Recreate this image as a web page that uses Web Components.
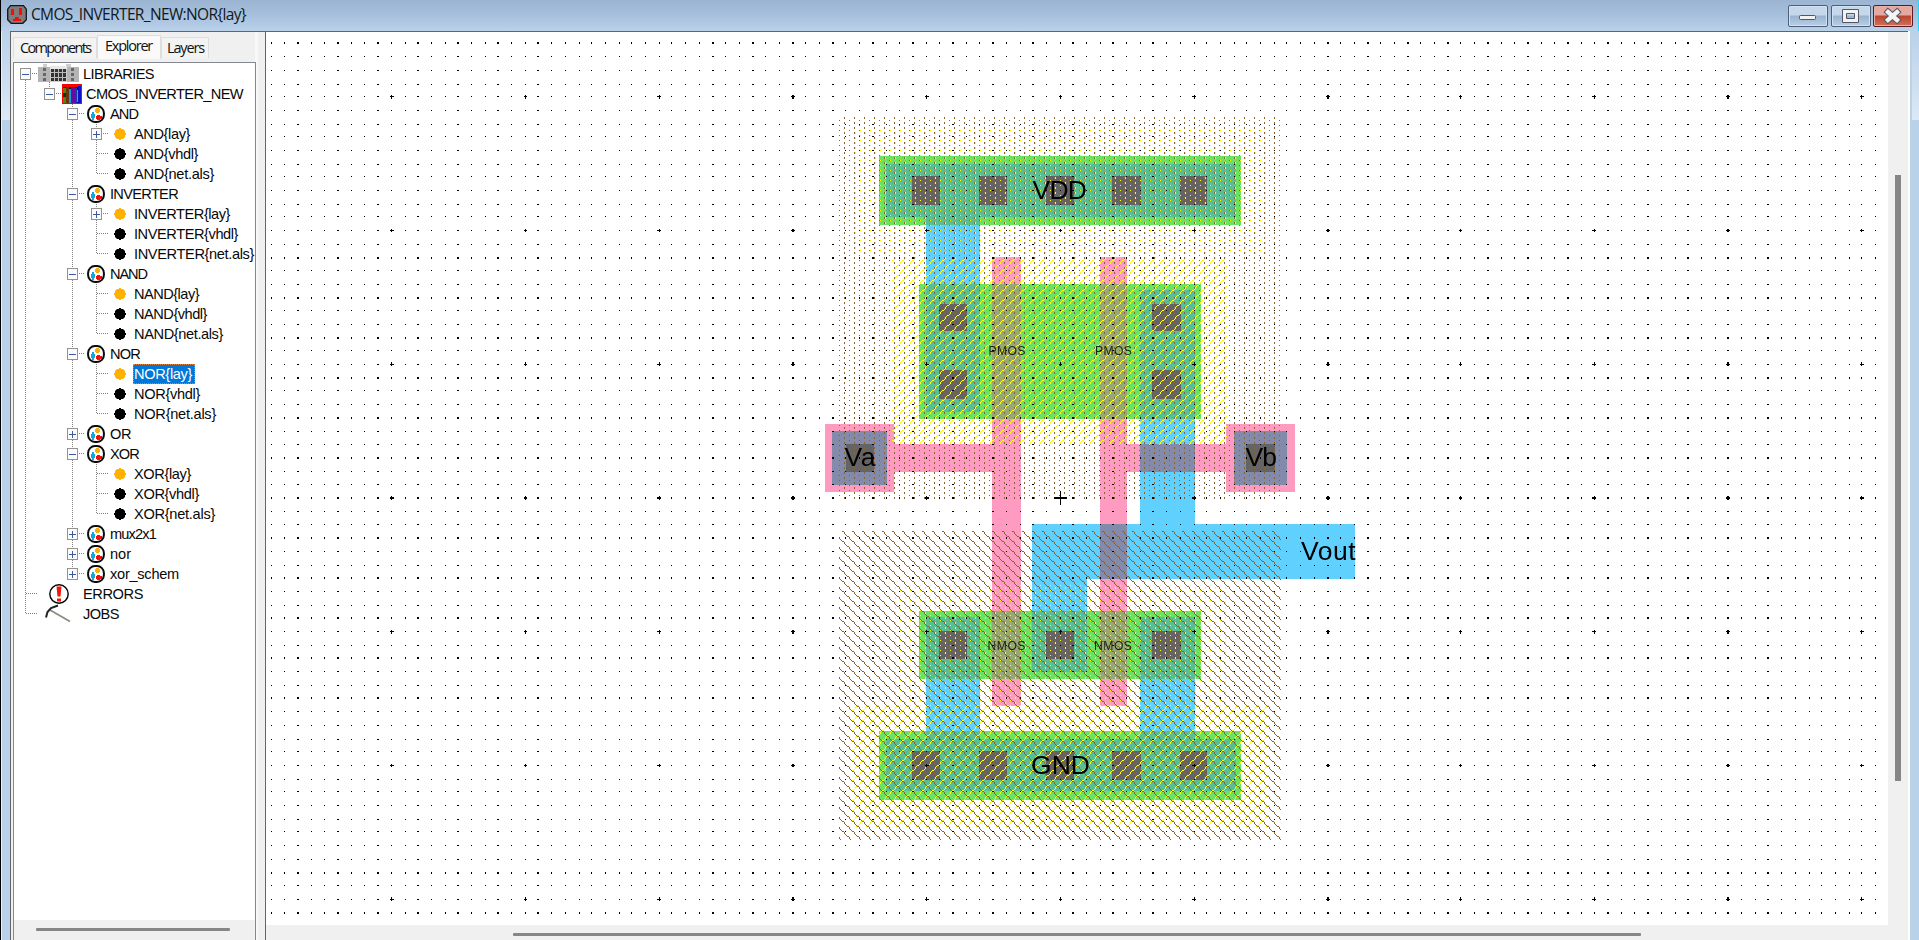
<!DOCTYPE html>
<html lang="en"><head><meta charset="utf-8"><title>CMOS_INVERTER_NEW:NOR{lay}</title>
<style>html,body{margin:0;height:100%;overflow:hidden}</style></head><body>
<layout-window></layout-window>
<script>
const meter = document.createElement('canvas').getContext('2d');
function spacing(text, width, font){ meter.font = font; return (width - meter.measureText(text).width) / text.length; }

/* Text set to a given advance width */
class FitText extends HTMLElement {
  connectedCallback(){
    const t = this.getAttribute('text'), w = +this.getAttribute('w'), f = this.getAttribute('font');
    this.attachShadow({mode:'open'}).innerHTML = `<style>:host{display:block;white-space:pre;font:${f};letter-spacing:${spacing(t,w,f).toFixed(3)}px}</style>${t}`;
  }
}
customElements.define('fit-text', FitText);

class TitleBar extends HTMLElement {
  connectedCallback(){
    this.attachShadow({mode:'open'}).innerHTML = `<style>
    :host{display:flex;height:31px;box-sizing:border-box;padding:0 5px 0 6px;background:linear-gradient(#9ab4d2,#a7c0dc 50%,#bad1ea);align-items:flex-start}
    .ic{margin-top:5px;width:20px;height:19px;flex:none}
    fit-text{margin:4px auto 0 4px;line-height:21px;color:#101820}
    .b{width:38px;height:20px;margin-top:5px;border:1px solid #4d5f79;border-radius:2px;background:linear-gradient(#c5d7ea 0 45%,#98b3cf 50%,#b9cfe6);box-shadow:inset 0 0 0 1px #d3e2f2;margin-left:3px}
    .x{margin-left:2px;background:linear-gradient(#e6a79f 0 45%,#b9432e 50%,#d37058);border-color:#5a1a20;box-shadow:inset 0 0 0 1px #e9b0a8}
    svg{display:block}</style>
    <svg class="ic" viewBox="0 0 20 19"><path d="M3.5.7h13l2.800 3.500v10.500l-3.500 3.600H4.200L.7 14.700V4.200z" fill="#807c7c" stroke="#151515" stroke-width="1.300"/><path d="M4 4h3v6H4zM12 3h3v7h-3zM8 12h3.500l.5 2h2v2H6v-2h2z" fill="#f10d0d"/></svg>
    <fit-text text="CMOS_INVERTER_NEW:NOR{lay}" w="215" font="15.5px 'Open Sans', 'Noto Sans', sans-serif"></fit-text>
    <div class="b"><svg width="38" height="20"><rect x="10.500" y="9.500" width="16" height="4" rx="1" fill="#f2f2f2" stroke="#535666"/></svg></div>
    <div class="b"><svg width="38" height="20"><path d="M10.500 3.500h16v13h-16zM14.500 7.500v5h8v-5z" fill="#f2f2f2" fill-rule="evenodd" stroke="#535666"/></svg></div>
    <div class="b x"><svg width="38" height="20"><path d="M14 6l9 8M23 6l-9 8" stroke="#535666" stroke-width="6.400" stroke-linecap="square"/><path d="M14 6l9 8M23 6l-9 8" stroke="#f4f4f4" stroke-width="4.400" stroke-linecap="square"/></svg></div>`;
  }
}
customElements.define('title-bar', TitleBar);

const ICONS = {
  libs:`<svg width="42" height="20"><path d="M0 3h5V0h4v3h19V0h5v3h8v15H0z" fill="#cdcdcd"/><path d="M0 3h12v15H0zM29 3h12v15H29z" fill="#b4b4b4"/><path d="M12 2h17v3H12z" fill="#e8e8e8"/><path d="M5 4h3v3H5zM5 9h3v3H5zM5 14h3v3H5zM33 4h3v3h-3zM33 9h3v3h-3zM33 14h3v3h-3z" fill="#666"/><path d="M13 5h15v12H13z" fill="#333"/><path d="M13 8.500h15M13 13.500h15M16.500 5v12M20.500 5v12M24.500 5v12" stroke="#bbb"/></svg>`,
  lib:`<svg width="20" height="20"><path d="M0 0h20v20H0z" fill="#f00"/><path d="M1 3h18v16H1z" fill="#111"/><path d="M1 4h3v15H1z" fill="#5f7f10"/><path d="M4 3h3v16H4z" fill="#6a3510"/><path d="M7 5h2v14H7z" fill="#12a0d8"/><path d="M9 3h4v16H9z" fill="#6a0aa0"/><path d="M13 4h2v15h-2z" fill="#163c9c"/><path d="M15 6h1v12h-1z" fill="#20d820"/><path d="M16 2h3v17h-3z" fill="#1010d0"/><path d="M1 9h3v4H1z" fill="#083808"/></svg>`,
  cell:`<svg width="18" height="18"><rect x="1.100" y="1.100" width="15.800" height="15.800" rx="6.800" fill="#fff" stroke="#0b0b0b" stroke-width="2"/><path d="M9 3h3v1h1v3h-1v1H9V7H8V4h1z" fill="#f6ad12"/><path d="M5 7h2v2h1v4H7v2H5v-2H4V9h1z" fill="#14a5df"/><path d="M10 10h3v1h2v3h-2v1h-3v-1H9v-3h1z" fill="#f01010"/></svg>`,
  lay:`<svg width="12" height="12"><path d="M5 0h2v1h2l2 2v2h1v2h-1v2L9 11H7v1H5v-1H3L1 9V7H0V5h1V3l2-2h2z" fill="#ffb000"/></svg>`,
  doc:`<svg width="12" height="12"><path d="M5 0h2v1h2l2 2v2h1v2h-1v2L9 11H7v1H5v-1H3L1 9V7H0V5h1V3l2-2h2z"/></svg>`,
  err:`<svg width="20" height="20"><circle cx="10" cy="10" r="9.200" fill="#fff" stroke="#000" stroke-width="1.400"/><path d="M7.500 2.500h5l-1 10h-3zM8 14.500h4v3H8z" fill="#f01808"/></svg>`,
  job:`<svg width="27" height="20"><path d="M5 6L25 17.500" stroke="#8f9180" stroke-width="2"/><path d="M1 13.500L2.500 8 6 4 13 1.500" fill="none" stroke="#1c2626" stroke-width="2"/></svg>`
};
const CX = [25.5, 49.5, 72.5, 96.5];

class TreeRow extends HTMLElement {
  connectedCallback(){
    const [depth, kind, text, w, box, guides] = this.data;
    const iconX = {libs:38,lib:62,cell:87,lay:114,doc:114,err:49,job:45}[kind];
    const textX = {libs:84,lib:87,cell:111,lay:135,doc:135,err:84,job:84}[kind];
    const iw = {libs:42,lib:20,cell:18,lay:12,doc:12,err:20,job:27}[kind];
    const o = 14, c = CX[depth]-o;
    let g = guides.map(([d,a,b])=>`<path d="M${CX[d]-o} ${a}V${b}"/>`).join('') + `<path d="M${c} 9.500H${c+11}"/>`;
    if(box) g += `<rect x="${c-5}" y="4.500" width="10" height="11" fill="#fbfbfb" style="stroke:#929292;stroke-dasharray:none"/><path d="M${c-3.5} 10.500h7${box=='+'?`M${c} 7v7`:''}" style="stroke:#3b5aa5;stroke-dasharray:none"/>`;
    this.attachShadow({mode:'open'}).innerHTML = `<style>
      :host{display:flex;height:20px;align-items:center;color:#080808}
      .g{flex:none;width:${iconX-o}px;height:20px;overflow:visible}.g path,.g rect{stroke:#808080;stroke-dasharray:1 1;shape-rendering:crispEdges}
      .g path{fill:none}
      .i{flex:none;width:${textX-iconX-2}px;display:flex}
      .t{line-height:18px;height:18px;border:1px dotted transparent}
      .sel{background:#0078d7;color:#fff;border-color:#e0803a;padding-right:2px}
      fit-text{position:relative;top:.5px}</style>
      <svg class="g">${g}</svg><span class="i">${ICONS[kind]}</span><span class="t ${text=='NOR{lay}'?'sel':''}"><fit-text text="${text}" w="${w+1}" font="14.600px 'Liberation Sans', Arial, sans-serif"></fit-text></span>`;
  }
}
customElements.define('tree-row', TreeRow);

const NODES = [[0,'libs','LIBRARIES',70,'-'],[1,'lib','CMOS_INVERTER_NEW',156,'-'],
 [2,'cell','AND',27,'-'],[3,'lay','AND{lay}',55,'+'],[3,'doc','AND{vhdl}',63],[3,'doc','AND{net.als}',79],
 [2,'cell','INVERTER',67,'-'],[3,'lay','INVERTER{lay}',95,'+'],[3,'doc','INVERTER{vhdl}',103],[3,'doc','INVERTER{net.als}',119],
 [2,'cell','NAND',36,'-'],[3,'lay','NAND{lay}',64],[3,'doc','NAND{vhdl}',72],[3,'doc','NAND{net.als}',88],
 [2,'cell','NOR',29,'-'],[3,'lay','NOR{lay}',57],[3,'doc','NOR{vhdl}',65],[3,'doc','NOR{net.als}',81],
 [2,'cell','OR',20,'+'],[2,'cell','XOR',28,'-'],[3,'lay','XOR{lay}',56],[3,'doc','XOR{vhdl}',64],[3,'doc','XOR{net.als}',80],
 [2,'cell','mux2x1',45,'+'],[2,'cell','nor',20,'+'],[2,'cell','xor_schem',68,'+'],[0,'err','ERRORS',59],[0,'job','JOBS',35]];

class ExplorerPanel extends HTMLElement {
  connectedCallback(){
    const F = "14.5px 'Open Sans', 'Noto Sans', sans-serif";
    const s = this.attachShadow({mode:'open'});
    s.innerHTML = `<style>
     :host{display:flex;flex-direction:column;width:247px;background:#f0f0f0;padding-left:2px;border-right:3px solid #f8f8f8;box-sizing:border-box;flex:none}
     .tabs{display:flex;height:30px;align-items:flex-end;box-sizing:border-box;padding-bottom:4px}
     .tab{height:21px;box-sizing:border-box;border:1px solid #dedede;border-bottom:0;background:#f3f3f3;flex:none;padding-left:6px}
     .on{height:24px;background:#fafafa;margin-bottom:-1px}
     .tab fit-text{line-height:20px;color:#111}
     .tree{flex:1;width:241px;border:1px solid #828790;border-bottom:0;background:#fff;overflow:hidden;display:flex;flex-direction:column}
     .rows{padding-top:1px;flex:1}
     .sb{height:20px;background:#f0f0f0;flex:none}.sb i{display:block;width:194px;height:3px;margin:8px 0 0 22px;border-radius:1px;background:#868686}
    </style><div class="tabs">
    <div class="tab" style="width:84px"><fit-text text="Components" w="70.5" font="${F}"></fit-text></div>
    <div class="tab on" style="width:64px;padding-left:7px"><fit-text text="Explorer" w="47" font="${F}"></fit-text></div>
    <div class="tab" style="width:48px;padding-left:5px"><fit-text text="Layers" w="37" font="${F}"></fit-text></div></div>
    <div class="tree"><div class="rows"></div><div class="sb"><i></i></div></div>`;
    const rows = s.querySelector('.rows');
    NODES.forEach((n,i)=>{
      const g = [], next = NODES[i+1];
      g.push([0, i==0?10:0, i==NODES.length-1?10:20]);
      if(i==0) g.push([1,18,20]);
      if(i==1) g.push([1,0,10],[2,18,20]);
      if(i>1 && i<26) g.push([2,0,i==25?10:20]);
      if(n[0]==3) g.push([3,0,next[0]==3?20:10]);
      if(n[0]==2 && next[0]==3) g.push([3,18,20]);
      const r = document.createElement('tree-row');
      r.data = [n[0],n[1],n[2],n[3],n[4],g];
      rows.append(r);
    });
  }
}
customElements.define('explorer-panel', ExplorerPanel);

/* Rectangles are [left, top, right, bottom] in window pixels */
const METAL = [[886,164,1236,217],[926,217,980,412],[1140,290,1195,524],[1032,524,1355,579],[1032,579,1087,672],[926,617,980,739],[1140,617,1195,739],[886,739,1236,791],[832,431,887,485],[1234,431,1287,485]];
const POLY = [[992,257,1021,706],[1100,257,1127,706],[825,424,894,492],[1226,424,1295,492],[894,444,992,472],[1127,444,1226,472]];
const ACTIVE = [[879,156,1241,225],[919,284,1201,419],[919,611,1201,679],[879,731,1241,800]];
const CUTS = [];
for(const x of [[912,940],[979,1007],[1046,1074],[1112,1141],[1180,1207]]) CUTS.push([x[0],176,x[1],205],[x[0],751,x[1],780]);
for(const x of [[939,967],[1152,1181]]) CUTS.push([x[0],304,x[1],331],[x[0],370,x[1],399],[x[0],631,x[1],659]);
CUTS.push([1046,631,1074,659],[846,444,874,472],[1246,444,1275,472]);
/* text, left, baseline, size, advance width */
const LABELS = [['VDD',1032.5,198.500,26.5,54.5],['GND',1031,773.500,26.5,59],['Va',844.5,466,26.5,31],['Vb',1245.5,466,26.5,31.5],['Vout',1301,560,26.5,54.5],['PMOS',988.5,355,12.2,37],['PMOS',1095,355,12.2,37],['NMOS',987.5,650,12.2,38],['NMOS',1094,650,12.2,38]];

const cross = (A,B)=>A.flatMap(a=>B.map(b=>[Math.max(a[0],b[0]),Math.max(a[1],b[1]),Math.min(a[2],b[2]),Math.min(a[3],b[3])])).filter(r=>r[0]<r[2]&&r[1]<r[3]);

/* The canvas works in logical pixels at 125% scaling: each fourth one spans two device pixels */
const dev = s => { const k=Math.floor(s/4), j=s-4*k; return j ? [5*k+3+j,1] : [5*k+2,2]; };
const log = d => { const k=Math.floor((d-2)/5), j=d-2-5*k; return 4*k+Math.max(0,j-1); };

class LayoutCanvas extends HTMLElement {
  connectedCallback(){
    const OX=266, OY=32, W=1622, H=893;
    const rects=(R,c)=>`<g fill="${c}">`+R.map(r=>`<rect x="${r[0]}" y="${r[1]}" width="${r[2]-r[0]}" height="${r[3]-r[1]}"/>`).join('')+'</g>';
    const s=this.attachShadow({mode:'open'});
    s.innerHTML=`<style>:host{display:grid;width:${W}px;height:${H}px;background:#fff;overflow:hidden}svg,canvas{grid-area:1/1;display:block}text{font-family:'Liberation Sans',Arial,sans-serif}</style>
    <svg width="${W}" height="${H}" viewBox="${OX} ${OY} ${W} ${H}" shape-rendering="crispEdges">
    ${rects(METAL,'#60d1ff')}${rects(POLY,'#ff9bc0')}${rects(ACTIVE,'#6be260')}${rects(cross(METAL,POLY),'#848aaa')}${rects(cross(METAL,ACTIVE),'#5abe94')}${rects(cross(POLY,ACTIVE),'#96a874')}${rects(CUTS,'#646464')}</svg>
    <canvas width="${W}" height="${H}"></canvas>
    <svg width="${W}" height="${H}" viewBox="${OX} ${OY} ${W} ${H}">${LABELS.map(l=>`<text x="${l[1]}" y="${l[2]}" font-size="${l[3]}" textLength="${l[4]}" fill="${l[3]<20?'#1c2418':'#000'}">${l[0]}</text>`).join('')}</svg>`;
    const c=s.querySelector('canvas').getContext('2d'); c.translate(-OX,-OY);
    const px=(x,y)=>{const a=dev(x),b=dev(y);c.fillRect(a[0],b[0],a[1],b[1]);};
    const hatch=(r,color,on)=>{c.fillStyle=color;for(let y=log(r[1]);y<=log(r[3]-1);y++)for(let x=log(r[0]);x<=log(r[2]-1);x++)if(on(x,y))px(x,y);};
    const m=(v,n)=>((v%n)+n)%n, B='#8b632e', Y='#ffff00';
    const ax=log(844), ay=log(117), by=log(120);
    const well=(x,y)=>(m(x-ax,8)==0&&m(y-ay,4)==0)||(m(x-ax,8)==4&&m(y-by,4)==0);
    const dots=(x,y)=>(m(x-ax,8)==1&&m(y-ay,4)==0)||(m(x-ax,8)==5&&m(y-by,4)==0);
    hatch([839,117,1281,499],B,well);
    hatch([854,130,1266,253],Y,dots);
    hatch([892,257,1227,445],Y,(x,y)=>m(x+y,8)==6);
    hatch([895,585,1227,706],Y,dots);
    hatch([852,705,1269,827],Y,(x,y)=>m(x+y,8)==6);
    hatch([839,531,1281,840],B,(x,y)=>m(x-y,8)==1);
    c.fillStyle='#000';
    for(let i=-59;i<=61;i++)for(let j=-34;j<=31;j++){
      const x=Math.round(845.6+i*10.695), y=Math.round(396.05+j*10.695); px(x,y);
      if(i%10==0&&j%10==0){const n=i||j?1:5;for(let k=-n;k<=n;k++){px(x+k,y);px(x,y+k);}}
    }
  }
}
customElements.define('layout-canvas', LayoutCanvas);

class LayoutWindow extends HTMLElement {
  connectedCallback(){
    this.attachShadow({mode:'open'}).innerHTML=`<style>
    :host{display:flex;width:1919px;height:940px;box-sizing:border-box;border-left:1px solid #000;border-right:1px solid #2fd3f5;background:#bad1ea;box-shadow:inset 1px 0 #e8f1fa}
    .win{flex:1;display:flex;flex-direction:column;min-width:0}
    .body{display:flex;flex:1;min-height:0}
    .edge{width:8px;margin-left:1px;flex:none;background:linear-gradient(#bad1ea,#dce8f5 89px,#bad1ea 89px)}
    .edge.r{margin:0 0 0 2px;width:7px}
    .in{flex:1;display:flex;border:1px solid #646464;border-right:0;border-bottom:0;background:#f0f0f0}
    .sep{width:7px;flex:none;background:#f0f0f0;border-right:1px solid #646464}
    .view{display:grid;grid-template:893px 15px/1622px 20px}
    .v{background:#868686;width:6px;height:606px;margin:143px 0 0 7px}
    .h{background:#868686;width:1128px;height:3px;margin:8px 0 0 247px;border-radius:1px}
    .rim{width:2px;background:#fff;flex:none}
    </style><div class="win"><title-bar></title-bar><div class="body"><div class="edge"></div>
    <div class="in"><explorer-panel></explorer-panel><div class="sep"></div>
    <div class="view"><layout-canvas></layout-canvas><div class="v"></div><div class="h"></div></div></div><div class="rim"></div><div class="edge r"></div></div></div>`;
  }
}
customElements.define('layout-window', LayoutWindow);
</script></body></html>
